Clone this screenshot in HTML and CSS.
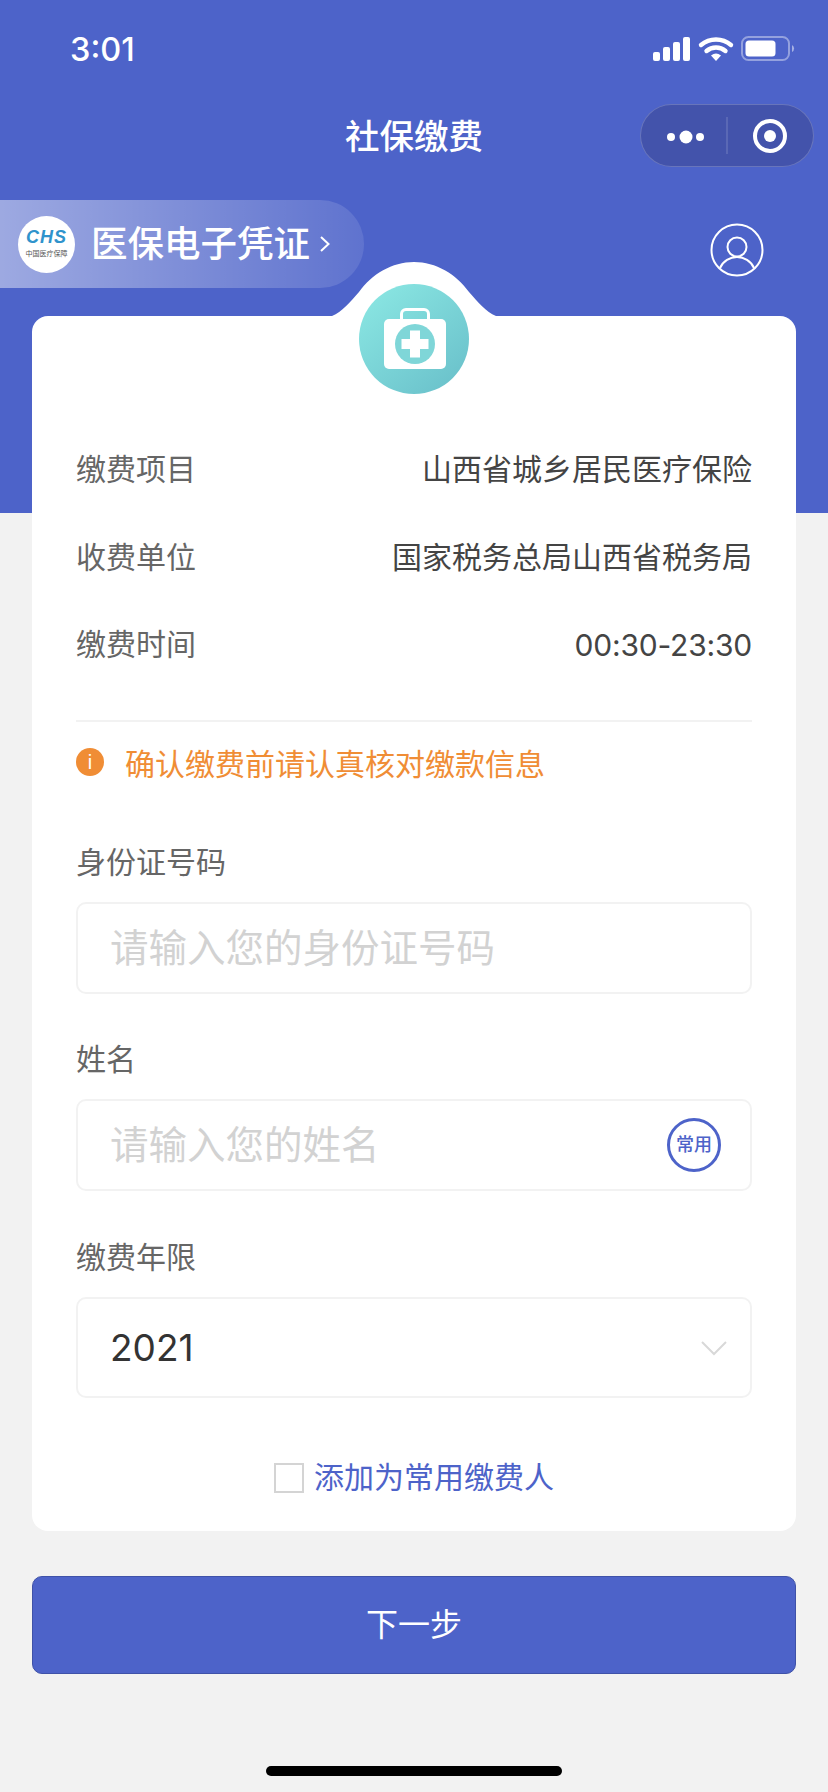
FILE: index.html
```html
<!DOCTYPE html>
<html lang="zh-CN">
<head>
    <meta charset="UTF-8">
    <meta name="viewport" content="width=device-width, initial-scale=1.0">
    <title>社保缴费</title>
    <link rel="stylesheet" href="styles.css">
</head>
<body>
    <div class="status-bar">
        <span class="time">3:01</span>
        <svg class="status-icons" width="142" height="26" viewBox="0 0 142 26">
            <!-- signal -->
            <rect x="0" y="16" width="7" height="9" rx="2" fill="#fff"/>
            <rect x="10" y="11" width="7" height="14" rx="2" fill="#fff"/>
            <rect x="20" y="6" width="7" height="19" rx="2" fill="#fff"/>
            <rect x="30" y="1" width="7" height="24" rx="2" fill="#fff"/>
            <!-- wifi -->
            <path d="M48 9 A23 23 0 0 1 78 9" fill="none" stroke="#fff" stroke-width="4.4" stroke-linecap="round"/>
            <path d="M53.5 15 A14.5 14.5 0 0 1 72.5 15" fill="none" stroke="#fff" stroke-width="4.4" stroke-linecap="round"/>
            <path d="M58 19.5 Q63 15.5 68 19.5 L63 25 Z" fill="#fff"/>
            <!-- battery -->
            <rect x="89" y="1" width="47" height="23" rx="6.5" fill="none" stroke="#fff" stroke-opacity="0.4" stroke-width="2"/>
            <rect x="92.500" y="4.500" width="30" height="16" rx="3.500" fill="#fff"/>
            <path d="M139 9 a4 4 0 0 1 0 7 Z" fill="#fff" fill-opacity="0.5"/>
        </svg>
    </div>

    <div class="nav-bar">
        <h1 class="nav-title">社保缴费</h1>
        <div class="capsule">
            <svg width="174" height="63" viewBox="0 0 174 63">
                <circle cx="31" cy="33" r="4" fill="#fff"/>
                <circle cx="46" cy="33" r="6.500" fill="#fff"/>
                <circle cx="60" cy="33" r="4" fill="#fff"/>
                <line x1="87" y1="13" x2="87" y2="50" stroke="#fff" stroke-opacity="0.25" stroke-width="1"/>
                <circle cx="130" cy="32" r="15" fill="none" stroke="#fff" stroke-width="4"/>
                <circle cx="130" cy="32" r="6" fill="#fff"/>
            </svg>
        </div>
    </div>

    <div class="banner-row">
        <div class="banner">
            <div class="chs-logo">
                <span class="chs-mark">CHS</span>
                <span class="chs-name">中国医疗保障</span>
            </div>
            <span class="banner-text">医保电子凭证</span>
            <svg class="banner-arrow" width="12" height="20" viewBox="0 0 12 20">
                <path d="M2 3 L9.500 10 L2 17" fill="none" stroke="#fff" stroke-width="2"/>
            </svg>
        </div>
        <svg class="user-icon" width="54" height="54" viewBox="0 0 54 54">
            <circle cx="27" cy="27" r="25.500" fill="none" stroke="#fff" stroke-width="2"/>
            <circle cx="27" cy="24" r="9.500" fill="none" stroke="#fff" stroke-width="2"/>
            <path d="M10 45 C13 38 20 34 27 34 C34 34 41 38 44 45" fill="none" stroke="#fff" stroke-width="2"/>
        </svg>
    </div>

    <main class="card">
        <!-- bump and round badge over the top edge of the card -->
        <svg class="card-bump" width="164" height="54" viewBox="0 0 164 54">
            <path d="M0 54 C10 50 18 40 27 30 C40 12 60 0 82 0 C104 0 124 12 137 30 C146 40 154 50 164 54 Z" fill="#fff"/>
        </svg>
        <svg class="card-badge" width="110" height="110" viewBox="0 0 110 110">
            <defs>
                <linearGradient id="teal" x1="0.15" y1="0.1" x2="0.85" y2="0.9">
                    <stop offset="0" stop-color="#88e4e1"/>
                    <stop offset="1" stop-color="#6cc3cc"/>
                </linearGradient>
            </defs>
            <circle cx="55" cy="55" r="55" fill="url(#teal)"/>
            <path d="M42.500 36 v-6 a4.500 4.500 0 0 1 4.500 -4.500 h18 a4.500 4.500 0 0 1 4.500 4.500 v6" fill="none" stroke="#fff" stroke-width="3"/>
            <rect x="25" y="35" width="62" height="50" rx="5" fill="#fff"/>
            <circle cx="56" cy="60" r="20" fill="#7fd6d8"/>
            <path d="M51 46.500 h10 v8.500 h8.500 v10 h-8.500 v8.500 h-10 v-8.500 h-8.500 v-10 h8.500 Z" fill="#fff"/>
        </svg>

        <div class="info-row">
            <span class="info-label">缴费项目</span>
            <span class="info-value">山西省城乡居民医疗保险</span>
        </div>
        <div class="info-row">
            <span class="info-label">收费单位</span>
            <span class="info-value">国家税务总局山西省税务局</span>
        </div>
        <div class="info-row">
            <span class="info-label">缴费时间</span>
            <span class="info-value num">00:30-23:30</span>
        </div>

        <div class="notice">
            <span class="notice-icon">i</span>
            <span class="notice-text">确认缴费前请认真核对缴款信息</span>
        </div>

        <div class="field">
            <div class="field-label">身份证号码</div>
            <div class="field-box">
                <span class="placeholder">请输入您的身份证号码</span>
            </div>
        </div>
        <div class="field">
            <div class="field-label">姓名</div>
            <div class="field-box">
                <span class="placeholder">请输入您的姓名</span>
                <span class="common-badge">常用</span>
            </div>
        </div>
        <div class="field field-last">
            <div class="field-label">缴费年限</div>
            <div class="field-box field-select">
                <span class="num">2021</span>
                <svg width="28" height="16" viewBox="0 0 28 16">
                    <path d="M2 2 L14 14 L26 2" fill="none" stroke="#d8d8d8" stroke-width="2"/>
                </svg>
            </div>
        </div>

        <label class="add-common">
            <span class="checkbox"></span>
            <span class="add-text">添加为常用缴费人</span>
        </label>
    </main>

    <button class="next-btn">下一步</button>

    <div class="home-bar"></div>
</body>
</html>
```

FILE: styles.css
```css
body {
    margin: 0;
    height: 1792px;
    overflow: hidden;
    font-family: "Noto Sans CJK SC", sans-serif;
    background: linear-gradient(#4d63c9 513px, #f2f2f2 513px);
    color: #333;
    display: flex;
    flex-direction: column;
}

.status-bar {
    height: 98px;
    padding: 0 33px 0 70px;
    display: flex;
    align-items: center;
    justify-content: space-between;
    box-sizing: border-box;
    flex-shrink: 0;
}

.time {
    font-family: Inter, sans-serif;
    font-size: 32.5px;
    font-weight: 500;
    color: white;
}

.nav-bar {
    height: 76px;
    position: relative;
    display: flex;
    align-items: center;
    justify-content: center;
    flex-shrink: 0;
}

.nav-title {
    margin: 0 0 5px;
    font-size: 34.5px;
    font-weight: 500;
    color: white;
}

.capsule {
    position: absolute;
    right: 14px;
    top: 6px;
    width: 174px;
    height: 63px;
    box-sizing: border-box;
    border: 1px solid rgba(255, 255, 255, 0.2);
    border-radius: 32px;
    background-color: #4353ab;
}

.capsule svg {
    display: block;
    margin: -1px;
}

.banner-row {
    margin-top: 26px;
    height: 88px;
    display: flex;
    justify-content: space-between;
    padding-right: 64px;
    flex-shrink: 0;
}

.banner {
    width: 364px;
    height: 88px;
    box-sizing: border-box;
    padding-left: 18px;
    display: flex;
    align-items: center;
    border-radius: 0 44px 44px 0;
    background: linear-gradient(to right, rgba(255, 255, 255, 0.45), rgba(255, 255, 255, 0.1));
}

.chs-logo {
    width: 57px;
    height: 57px;
    padding-bottom: 4px;
    box-sizing: border-box;
    border-radius: 50%;
    background-color: white;
    display: flex;
    flex-direction: column;
    align-items: center;
    justify-content: center;
    flex-shrink: 0;
}

.chs-mark {
    font-family: "Liberation Sans", sans-serif;
    font-size: 18px;
    line-height: 21px;
    font-weight: bold;
    font-style: italic;
    letter-spacing: 1px;
    color: #2f93cc;
}

.chs-name {
    font-size: 7px;
    line-height: 10px;
    color: #555;
}

.banner-text {
    margin: 0 0 6px 16px;
    font-size: 36.5px;
    font-weight: 500;
    color: white;
}

.banner-arrow {
    margin-left: 9px;
}

.user-icon {
    margin-top: 23px;
}

.card {
    position: relative;
    margin: 28px 32px 0;
    padding: 110px 44px 33px;
    background-color: white;
    border-radius: 16px;
    flex-shrink: 0;
}

.card-bump {
    position: absolute;
    left: 300px;
    top: -54px;
}

.card-badge {
    position: absolute;
    left: 327px;
    top: -32px;
}

.info-row {
    height: 87.5px;
    display: flex;
    align-items: center;
    justify-content: space-between;
    font-size: 30px;
}

.info-label {
    margin-bottom: 5px;
    color: #666;
}

.info-value {
    margin-bottom: 5px;
    color: #444;
}

.num {
    font-family: Inter, sans-serif;
}

.info-value.num {
    margin-bottom: 0;
    letter-spacing: -0.2px;
}

.notice {
    margin-top: 31.5px;
    border-top: 2px solid #f2f2f2;
    padding-top: 13px;
    height: 60px;
    display: flex;
    align-items: center;
    font-size: 30px;
    color: #f08d35;
}

.notice-icon {
    width: 28px;
    height: 28px;
    margin-right: 21px;
    margin-top: -6px;
    border-radius: 50%;
    background-color: #f08d35;
    color: white;
    font-family: "Liberation Sans", sans-serif;
    font-size: 20px;
    line-height: 28px;
    text-align: center;
}

.notice-text {
    margin-bottom: 6px;
}

.field {
    margin-top: 46px;
}

.notice + .field {
    margin-top: 48px;
}

.field-last {
    margin-top: 47px;
}

.field-label {
    height: 40px;
    margin-bottom: 19px;
    font-size: 30px;
    line-height: 34px;
    color: #666;
}

.field-box {
    height: 92px;
    box-sizing: border-box;
    border: 2px solid #f2f2f2;
    border-radius: 10px;
    padding: 0 29px 0 32px;
    display: flex;
    align-items: center;
    justify-content: space-between;
    font-size: 38.5px;
}

.placeholder {
    margin-bottom: 6px;
    color: #d2d2d2;
}

.field-select {
    height: 101px;
    padding-right: 22px;
    font-size: 37px;
    color: #333;
}

.common-badge {
    width: 54px;
    height: 54px;
    box-sizing: border-box;
    border: 3.5px solid #4d63c9;
    border-radius: 50%;
    font-size: 18px;
    font-weight: 500;
    line-height: 45px;
    text-align: center;
    color: #4d63c9;
}

.add-common {
    margin-top: 60px;
    height: 40px;
    display: flex;
    align-items: center;
    justify-content: center;
    font-size: 30px;
    color: #4d63c9;
}

.checkbox {
    width: 30px;
    height: 30px;
    box-sizing: border-box;
    border: 2px solid #d4d4d4;
    margin-right: 10px;
}

.add-text {
    margin-bottom: 6px;
}

.next-btn {
    margin: 44.5px 32px 0;
    height: 98px;
    padding-bottom: 6px;
    border: 1px solid #3f52a8;
    border-radius: 10px;
    background-color: #4d63c9;
    color: white;
    font-family: inherit;
    font-size: 32px;
    flex-shrink: 0;
}

.home-bar {
    width: 296px;
    height: 10px;
    margin: 92px auto 0;
    border-radius: 5px;
    background-color: black;
    flex-shrink: 0;
}
```
